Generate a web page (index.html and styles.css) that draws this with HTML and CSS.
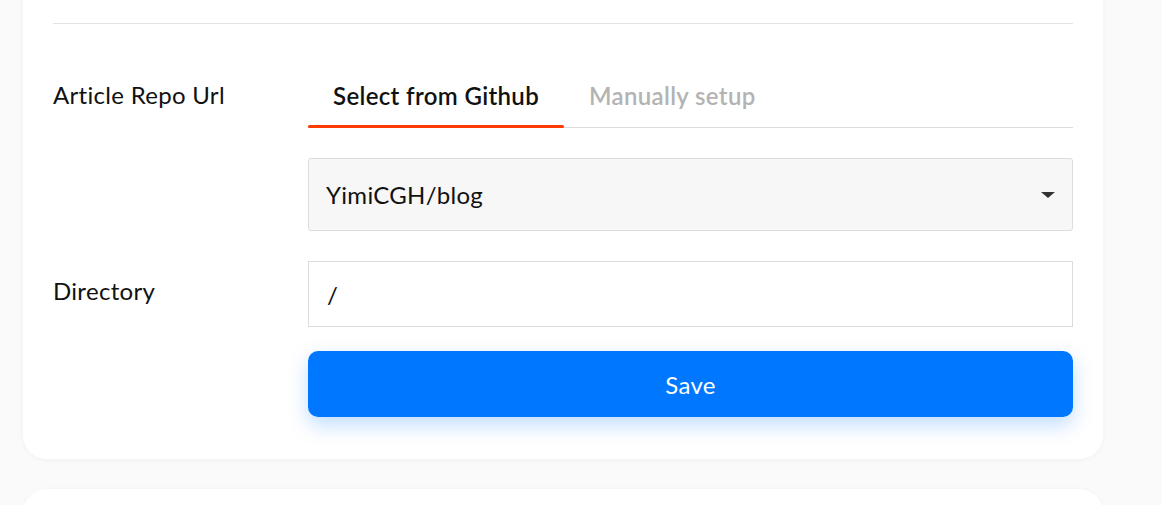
FILE: index.html
```html
<!DOCTYPE html>
<html lang="en">
<head>
<meta charset="utf-8">
<link rel="stylesheet" href="styles.css">
</head>
<body>
<div class="page">
  <section class="card">
    <div class="divider"></div>
    <div class="form-row first">
      <div class="label">Article Repo Url</div>
      <div class="field">
        <div class="tabs">
          <div class="tab active">Select from Github</div>
          <div class="tab">Manually setup</div>
        </div>
        <div class="select">
          <span>YimiCGH/blog</span>
          <span class="caret"></span>
        </div>
      </div>
    </div>
    <div class="form-row">
      <div class="label label-input">Directory</div>
      <div class="field">
        <div class="input">/</div>
        <button class="save">Save</button>
      </div>
    </div>
  </section>
  <section class="card next"></section>
</div>
</body>
</html>
```

FILE: styles.css
```css
* { box-sizing: border-box; }
html, body { margin: 0; padding: 0; }
body {
  background: #fafafa;
  font-family: "Lato", "Noto Sans", sans-serif;
  color: #111;
  letter-spacing: 0.3px;
  height: 505px;
  overflow: hidden;
}
.page {
  padding: 0 59px 0 23px;
}
.card {
  background: #fff;
  border-radius: 24px;
  box-shadow: 0 1px 6px rgba(0,0,0,0.04);
  margin-top: -40px;
  padding: 63px 30px 42px;
}
.card.next {
  margin-top: 30px;
  height: 60px;
  padding: 0;
}
.divider {
  height: 1px;
  background: #e3e3e3;
}
.form-row {
  display: flex;
}
.form-row.first { margin-top: 40px; }
.label {
  width: 255px;
  flex-shrink: 0;
  font-size: 24px;
  line-height: 30px;
  padding-top: 16px;
}
.label.label-input { padding-top: 15px; }
.field {
  flex: 1;
  display: flex;
  flex-direction: column;
}
.tabs {
  display: flex;
  height: 64px;
  border-bottom: 1px solid #dcdcdc;
}
.tab {
  padding: 0 25px;
  font-size: 24px;
  font-weight: 600;
  letter-spacing: 0.35px;
  color: #b3b3b3;
  display: flex;
  align-items: center;
  position: relative;
}
.tab.active { color: #111; }
.tab.active::after {
  content: "";
  position: absolute;
  left: 0; right: 0; bottom: -1px;
  height: 3px;
  background: #ff3b00;
  border-radius: 2px;
}
.select {
  margin-top: 30px;
  height: 73px;
  background: #f7f7f7;
  border: 1px solid #dcdcdc;
  border-radius: 3px;
  display: flex;
  align-items: center;
  justify-content: space-between;
  padding: 0 17px 0 17px;
  font-size: 24px;
}
.caret {
  width: 0; height: 0;
  border-left: 7px solid transparent;
  border-right: 7px solid transparent;
  border-top: 6px solid #333;
}
.input {
  height: 66px;
  border: 1px solid #dcdcdc;
  background: #fff;
  display: flex;
  align-items: center;
  padding: 0 18px;
  font-size: 24px;
}
.form-row + .form-row { margin-top: 30px; }
.save {
  margin-top: 24px;
  height: 66px;
  border: none;
  border-radius: 10px;
  background: #0077ff;
  color: #fff;
  font-family: inherit;
  letter-spacing: inherit;
  font-size: 24px;
  box-shadow: 0 8px 20px rgba(0,119,255,0.25);
}
```
